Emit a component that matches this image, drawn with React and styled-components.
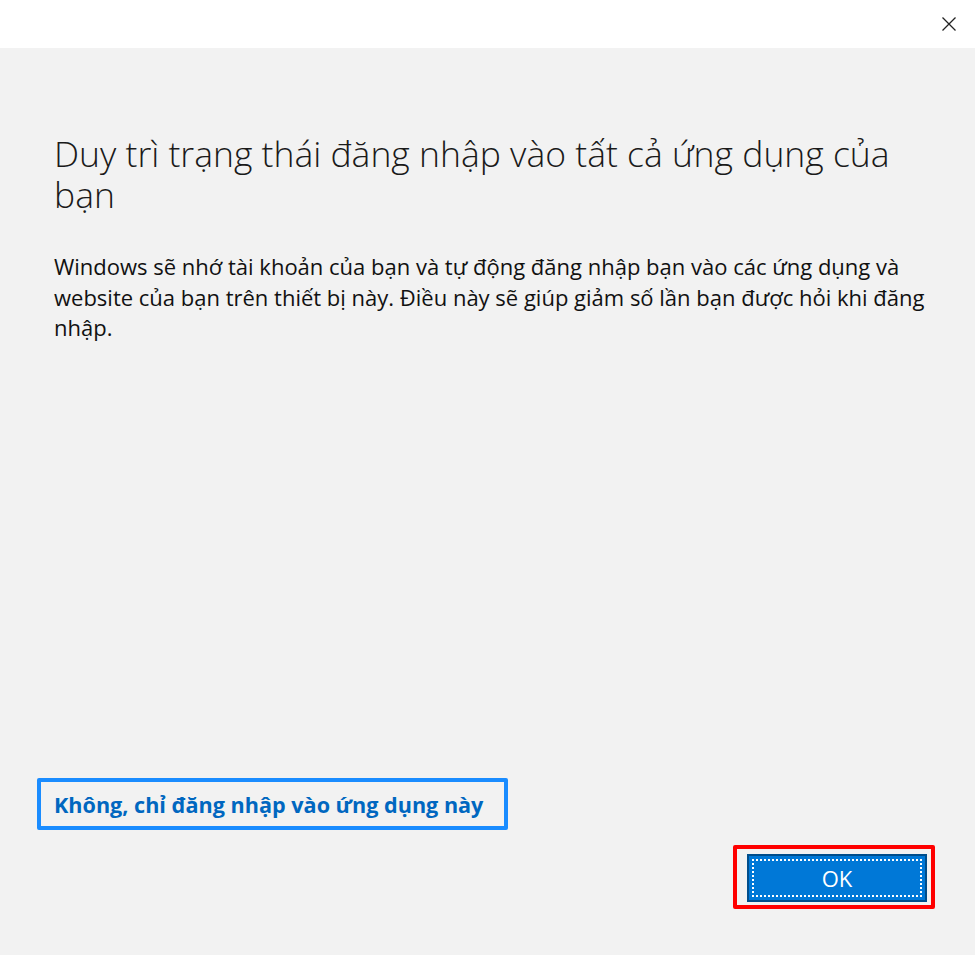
import React from 'react';
import styled, { createGlobalStyle } from 'styled-components';

const GlobalStyle = createGlobalStyle`
  html, body {
    margin: 0;
    padding: 0;
    background: #f2f2f2;
  }
  body {
    font-family: "Open Sans", "Noto Sans", "Liberation Sans", sans-serif;
  }
`;

const Window = styled.div`
  width: 975px;
  height: 955px;
  display: flex;
  flex-direction: column;
  background: #f2f2f2;
  overflow: hidden;
`;

const TitleBar = styled.div`
  height: 48px;
  flex-shrink: 0;
  background: #ffffff;
  display: flex;
  justify-content: flex-end;
  align-items: center;
  padding-right: 12px;
`;

const CloseButton = styled.button`
  width: 28px;
  height: 28px;
  border: none;
  background: transparent;
  padding: 0;
  display: flex;
  align-items: center;
  justify-content: center;
  cursor: pointer;
`;

const Body = styled.div`
  flex: 1;
  display: flex;
  flex-direction: column;
  padding: 85px 40px 46px 54px;
`;

const Heading = styled.h1`
  margin: 0;
  font-size: 35.5px;
  font-weight: 300;
  line-height: 41px;
  color: #1a1a1a;
`;

const Description = styled.p`
  margin: 36px 0 0 0;
  font-size: 22px;
  font-weight: 400;
  line-height: 30.5px;
  color: #111;
`;

const Spacer = styled.div`
  flex: 1;
`;

const LinkButton = styled.button`
  align-self: flex-start;
  margin-left: -17px;
  height: 52px;
  padding: 0 21px 0 13px;
  border: 4px solid #1a8cff;
  border-radius: 2px;
  background: transparent;
  color: #0067c0;
  font-family: inherit;
  font-size: 21.6px;
  font-weight: 700;
  cursor: pointer;
`;

const Footer = styled.div`
  display: flex;
  justify-content: flex-end;
  margin-top: 15px;
`;

const Highlight = styled.div`
  border: 4px solid #ff0000;
  border-radius: 2px;
  padding: 5px 4px 3px 10px;
`;

const PrimaryButton = styled.button`
  width: 180px;
  height: 48px;
  border: 2px solid #004e8c;
  background: #0078d7;
  color: #ffffff;
  font-family: inherit;
  font-size: 22px;
  padding: 3px;
  display: flex;
  cursor: pointer;
`;

const FocusRing = styled.span`
  flex: 1;
  border: 2px dotted #ffffff;
  display: flex;
  align-items: center;
  justify-content: center;
`;

const App = () => (
  <Window>
    <GlobalStyle />
    <TitleBar>
      <CloseButton aria-label="Đóng">
        <svg width="16" height="16" viewBox="0 0 16 16">
          <path d="M1.5 1.5 L14.5 14.5 M14.5 1.5 L1.5 14.5" stroke="#222" strokeWidth="1.3" fill="none" />
        </svg>
      </CloseButton>
    </TitleBar>
    <Body>
      <Heading>Duy trì trạng thái đăng nhập vào tất cả ứng dụng của bạn</Heading>
      <Description>
        Windows sẽ nhớ tài khoản của bạn và tự động đăng nhập bạn vào các ứng dụng và
        website của bạn trên thiết bị này. Điều này sẽ giúp giảm số lần bạn được hỏi khi đăng
        nhập.
      </Description>
      <Spacer />
      <LinkButton>Không, chỉ đăng nhập vào ứng dụng này</LinkButton>
      <Footer>
        <Highlight>
          <PrimaryButton>
            <FocusRing>OK</FocusRing>
          </PrimaryButton>
        </Highlight>
      </Footer>
    </Body>
  </Window>
);

export default App;
